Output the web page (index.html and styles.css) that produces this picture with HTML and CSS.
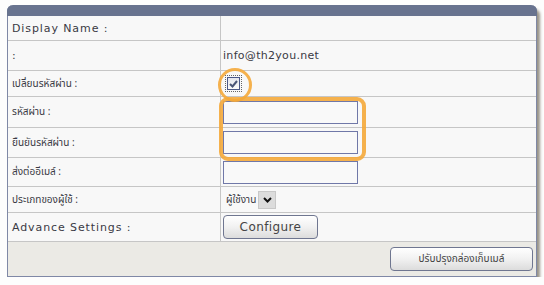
FILE: index.html
```html
<!DOCTYPE html>
<html lang="th">
<head>
    <meta charset="UTF-8">
    <title>Mailbox Settings</title>
    <link rel="stylesheet" href="styles.css">
</head>
<body>
    <div class="panel">
        <div class="panel-head"></div>
        <div class="row r1">
            <div class="label">Display Name :</div>
            <div class="value"></div>
        </div>
        <div class="row r2">
            <div class="label">:</div>
            <div class="value">info@th2you.net</div>
        </div>
        <div class="row r3">
            <div class="label thai">เปลี่ยนรหัสผ่าน :</div>
            <div class="value">
                <span class="check">
                    <span class="check-box">
                        <svg width="9" height="8" viewBox="0 0 9 8"><path d="M1 4 L3.5 6.5 L8 1" fill="none" stroke="#4a5577" stroke-width="2"/></svg>
                    </span>
                </span>
            </div>
        </div>
        <div class="row r4">
            <div class="label thai">รหัสผ่าน :</div>
            <div class="value"><input class="field" type="password"></div>
        </div>
        <div class="row r5">
            <div class="label thai">ยืนยันรหัสผ่าน :</div>
            <div class="value"><input class="field" type="password"></div>
        </div>
        <div class="row r6">
            <div class="label thai">ส่งต่ออีเมล์ :</div>
            <div class="value"><input class="field" type="text"></div>
        </div>
        <div class="row r7">
            <div class="label thai">ประเภทของผู้ใช้ :</div>
            <div class="value">
                <span class="select">
                    <span class="select-text thai">ผู้ใช้งาน</span>
                    <span class="select-arrow">
                        <svg width="9" height="6" viewBox="0 0 9 6"><path d="M1 1 L4.5 4.5 L8 1" fill="none" stroke="#111" stroke-width="2"/></svg>
                    </span>
                </span>
            </div>
        </div>
        <div class="row r8">
            <div class="label">Advance Settings :</div>
            <div class="value"><button class="btn btn-config">Configure</button></div>
        </div>
        <div class="footer">
            <button class="btn btn-save thai">ปรับปรุงกล่องเก็บเมล์</button>
        </div>

        <div class="mark-circle"></div>
        <div class="mark-box"></div>
    </div>
</body>
</html>
```

FILE: styles.css
```css
body {
    margin: 0;
    background-color: #fdfdfd;
    font-family: "DejaVu Sans", Verdana, sans-serif;
    color: #3a3a44;
}

.panel {
    position: relative;
    margin: 5px 0 0 7px;
    width: 528px;
    background-color: #f8f8f8;
    border: 1px solid #7f88a6;
    border-top: none;
    border-radius: 6px 6px 0 0;
    box-shadow: 3px 4px 3px rgba(70, 60, 40, 0.55);
}

.panel-head {
    height: 11px;
    margin: 0 -1px;
    background-color: #68738f;
    border-radius: 6px 6px 0 0;
}

.row {
    display: grid;
    grid-template-columns: 213px 1fr;
    border-bottom: 1px solid #c6c6c6;
}

.r1 { height: 24px; }
.r2 { height: 29px; }
.r3 { height: 25px; }
.r4 { height: 30px; }
.r5 { height: 29px; }
.r6 { height: 28px; }
.r7 { height: 25px; }
.r8 { height: 28px; }

.label {
    display: flex;
    align-items: center;
    padding-left: 4px;
    border-right: 1px solid #c6c6c6;
    font-size: 11px;
    letter-spacing: 0.9px;
}

.value {
    display: flex;
    align-items: center;
    padding-left: 2px;
    font-size: 11px;
    letter-spacing: 0.3px;
}

.thai {
    font-family: "Noto Sans Thai", "Tahoma", "DejaVu Sans", sans-serif;
    font-size: 10px;
    letter-spacing: 0;
}

.check {
    display: flex;
    align-items: center;
    justify-content: center;
    margin-left: 2px;
    width: 17px;
    height: 17px;
    outline: 1px dotted #666;
    outline-offset: -1px;
}

.check-box {
    display: flex;
    align-items: center;
    justify-content: center;
    width: 11px;
    height: 11px;
    border: 1px solid #4b5888;
    background: linear-gradient(#e4e6ee, #fafafa);
}

.field {
    width: 135px;
    height: 23px;
    box-sizing: border-box;
    margin: 0;
    border: 1px solid #7078a8;
    background-color: #f9f9f9;
}

.select {
    display: flex;
    align-items: center;
    gap: 2px;
    height: 18px;
}

.select-text {
    padding-left: 3px;
}

.select-arrow {
    display: flex;
    align-items: center;
    justify-content: center;
    width: 16px;
    height: 16px;
    background-color: #dcdcdc;
    border: 1px solid #c8c8c8;
}

.btn {
    font-family: "DejaVu Sans", Verdana, sans-serif;
    color: #444;
    border: 1px solid #6f7690;
    border-radius: 4px;
    background: linear-gradient(#ffffff, #f1f1f1 50%, #dcdcdc);
    padding: 0;
}

.btn-config {
    width: 95px;
    height: 24px;
    font-size: 12px;
    letter-spacing: 0.4px;
}

.footer {
    display: flex;
    justify-content: flex-end;
    align-items: center;
    height: 34px;
    padding-right: 3px;
    background-color: #ebeae5;
}

.btn-save {
    width: 143px;
    height: 24px;
    font-family: "Noto Sans Thai", "Tahoma", "DejaVu Sans", sans-serif;
    font-size: 10px;
}

.mark-circle {
    position: absolute;
    left: 210px;
    top: 63px;
    width: 28px;
    height: 28px;
    border: 3px solid rgba(244, 168, 58, 0.9);
    border-radius: 50%;
}

.mark-box {
    position: absolute;
    left: 211px;
    top: 92px;
    width: 139px;
    height: 56px;
    border: 4px solid rgba(244, 168, 58, 0.9);
    border-radius: 9px;
}
```
